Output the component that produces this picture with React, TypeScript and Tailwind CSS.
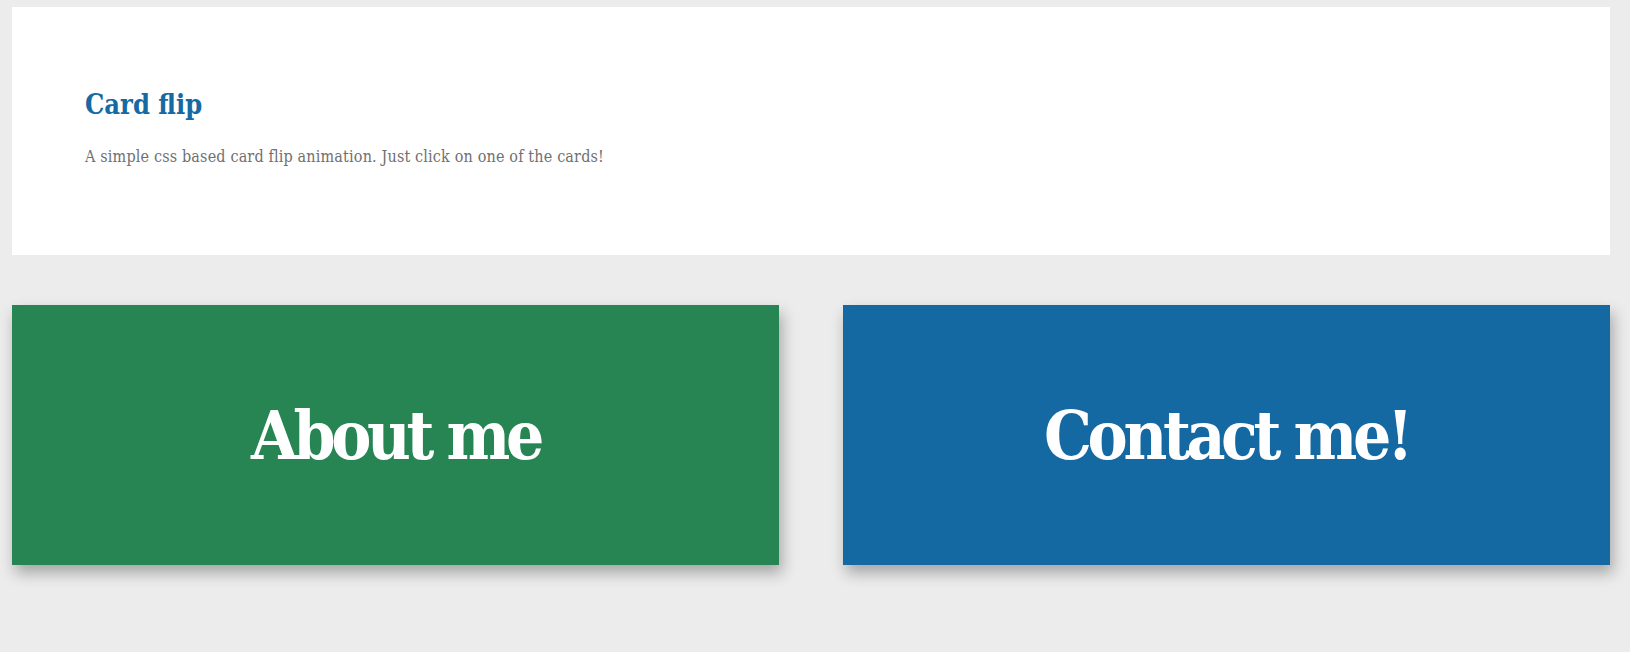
const slab = { fontFamily: '"DejaVu Serif", serif' };

function Card({ label, color }: { label: string; color: string }) {
  return (
    <div
      className={`flex h-[260px] items-center justify-center shadow-[3px_8px_14px_rgba(0,0,0,0.3)] ${color}`}
    >
      <h2 className="text-[67px] font-bold leading-none tracking-[-0.065em] text-white font-stretch-condensed">
        {label}
      </h2>
    </div>
  );
}

export default function App() {
  return (
    <div className="min-h-[652px] bg-[#ececec] pt-[7px] pl-[12px] pr-[20px]" style={slab}>
      <section className="h-[248px] bg-white px-[73px] pt-[82px]">
        <h1 className="text-[27px] font-bold leading-[32px] text-[#156aa3] font-stretch-condensed">
          Card flip
        </h1>
        <p className="mt-[25px] text-[16px] leading-[22px] tracking-[0.01em] text-[#707070] font-stretch-condensed">
          A simple css based card flip animation. Just click on one of the cards!
        </p>
      </section>

      <div className="mt-[50px] grid grid-cols-2 gap-[64px]">
        <Card label="About me" color="bg-[#278553]" />
        <Card label="Contact me!" color="bg-[#1469a3]" />
      </div>
    </div>
  );
}
